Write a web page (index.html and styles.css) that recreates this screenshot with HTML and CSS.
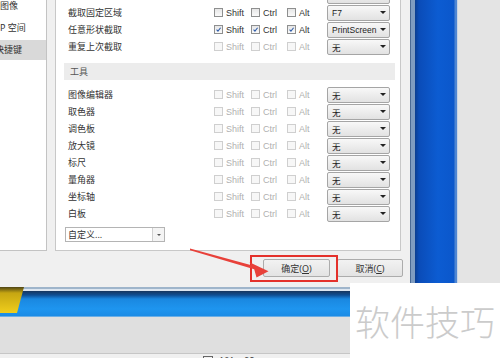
FILE: index.html
```html
<!DOCTYPE html>
<html lang="zh-CN">

    <head>
        <meta charset="UTF-8">
        <meta name="viewport" content="width=device-width, initial-scale=1.0">
        <title>快捷键设置</title>
        <link rel="stylesheet" href="styles.css">
    </head>

    <body>
        <div class="screen">
            <div class="top">
                <div class="dialog">
                    <div class="dialog-body">
                        <ul class="nav">
                            <li>图像</li>
                            <li>P 空间</li>
                            <li class="active"><span class="cut">快捷键</span></li>
                        </ul>

                        <div class="panel">
                            <div class="rows first">
                                <div class="row">
                                    <span class="label"></span>
                                    <span></span><span></span><span></span>
                                    <span class="select"><span></span><i class="caret"></i></span>
                                </div>
                                <div class="row">
                                    <span class="label">截取固定区域</span>
                                    <span class="check"><i class="box"></i>Shift</span>
                                    <span class="check"><i class="box"></i>Ctrl</span>
                                    <span class="check"><i class="box"></i>Alt</span>
                                    <span class="select"><span>F7</span><i class="caret"></i></span>
                                </div>
                                <div class="row">
                                    <span class="label">任意形状截取</span>
                                    <span class="check"><i class="box on"><svg viewBox="0 0 9 9"><path d="M2 4.6 L3.8 6.6 L7.2 2.2"/></svg></i>Shift</span>
                                    <span class="check"><i class="box on"><svg viewBox="0 0 9 9"><path d="M2 4.6 L3.8 6.6 L7.2 2.2"/></svg></i>Ctrl</span>
                                    <span class="check"><i class="box on"><svg viewBox="0 0 9 9"><path d="M2 4.6 L3.8 6.6 L7.2 2.2"/></svg></i>Alt</span>
                                    <span class="select"><span>PrintScreen</span><i class="caret"></i></span>
                                </div>
                                <div class="row off">
                                    <span class="label">重复上次截取</span>
                                    <span class="check"><i class="box"></i>Shift</span>
                                    <span class="check"><i class="box"></i>Ctrl</span>
                                    <span class="check"><i class="box"></i>Alt</span>
                                    <span class="select"><span>无</span><i class="caret"></i></span>
                                </div>
                            </div>

                            <div class="section">工具</div>

                            <div class="rows tools">
                                <div class="row off">
                                    <span class="label">图像编辑器</span>
                                    <span class="check"><i class="box"></i>Shift</span>
                                    <span class="check"><i class="box"></i>Ctrl</span>
                                    <span class="check"><i class="box"></i>Alt</span>
                                    <span class="select"><span>无</span><i class="caret"></i></span>
                                </div>
                                <div class="row off">
                                    <span class="label">取色器</span>
                                    <span class="check"><i class="box"></i>Shift</span>
                                    <span class="check"><i class="box"></i>Ctrl</span>
                                    <span class="check"><i class="box"></i>Alt</span>
                                    <span class="select"><span>无</span><i class="caret"></i></span>
                                </div>
                                <div class="row off">
                                    <span class="label">调色板</span>
                                    <span class="check"><i class="box"></i>Shift</span>
                                    <span class="check"><i class="box"></i>Ctrl</span>
                                    <span class="check"><i class="box"></i>Alt</span>
                                    <span class="select"><span>无</span><i class="caret"></i></span>
                                </div>
                                <div class="row off">
                                    <span class="label">放大镜</span>
                                    <span class="check"><i class="box"></i>Shift</span>
                                    <span class="check"><i class="box"></i>Ctrl</span>
                                    <span class="check"><i class="box"></i>Alt</span>
                                    <span class="select"><span>无</span><i class="caret"></i></span>
                                </div>
                                <div class="row off">
                                    <span class="label">标尺</span>
                                    <span class="check"><i class="box"></i>Shift</span>
                                    <span class="check"><i class="box"></i>Ctrl</span>
                                    <span class="check"><i class="box"></i>Alt</span>
                                    <span class="select"><span>无</span><i class="caret"></i></span>
                                </div>
                                <div class="row off">
                                    <span class="label">量角器</span>
                                    <span class="check"><i class="box"></i>Shift</span>
                                    <span class="check"><i class="box"></i>Ctrl</span>
                                    <span class="check"><i class="box"></i>Alt</span>
                                    <span class="select"><span>无</span><i class="caret"></i></span>
                                </div>
                                <div class="row off">
                                    <span class="label">坐标轴</span>
                                    <span class="check"><i class="box"></i>Shift</span>
                                    <span class="check"><i class="box"></i>Ctrl</span>
                                    <span class="check"><i class="box"></i>Alt</span>
                                    <span class="select"><span>无</span><i class="caret"></i></span>
                                </div>
                                <div class="row off">
                                    <span class="label">白板</span>
                                    <span class="check"><i class="box"></i>Shift</span>
                                    <span class="check"><i class="box"></i>Ctrl</span>
                                    <span class="check"><i class="box"></i>Alt</span>
                                    <span class="select"><span>无</span><i class="caret"></i></span>
                                </div>
                            </div>

                            <div class="custom">
                                <span class="custom-text">自定义...</span>
                                <span class="custom-btn"><i class="caret small"></i></span>
                            </div>
                        </div>
                    </div>

                    <div class="buttons">
                        <button class="btn">确定(<u>O</u>)</button>
                        <button class="btn">取消(<u>C</u>)</button>
                    </div>

                    <!-- annotation drawn over the dialog -->
                    <div class="mark"></div>
                    <svg class="arrow" viewBox="0 0 410 283">
                        <polygon points="190,248.4 251.5,265.2 249.5,262.2 268.5,271.2 256.5,277.5 254.2,269.2 190,250.2"/>
                    </svg>
                </div>
                <div class="strip"></div>
                <div class="desk"></div>
            </div>

            <div class="taskbar"><div class="orb"></div></div>
            <div class="tray"></div>
            <div class="status"><i class="status-icon"></i>101 × 92</div>

            <div class="watermark">软件技巧</div>
        </div>
    </body>

</html>
```

FILE: styles.css
```css
* {
    box-sizing: border-box;
}

html,
body {
    margin: 0;
}

body {
    width: 500px;
    height: 358px;
    overflow: hidden;
    font-family: "Noto Sans", "Noto Sans CJK SC", sans-serif;
    font-size: 9px;
    color: #333;
    background-color: #f0f0f0;
}

.screen {
    position: relative;
    height: 358px;
}

.top {
    display: flex;
    height: 283px;
}

/* dialog */
.dialog {
    position: relative;
    width: 410px;
    background-color: #f0f0f0;
}

.dialog-body {
    display: flex;
    gap: 8px;
    height: 251px;
}

.nav {
    width: 47px;
    margin: 0;
    padding: 0;
    list-style: none;
    background: white;
    border-right: 1px solid #c3c3c3;
    border-bottom: 1px solid #c3c3c3;
    display: flex;
    flex-direction: column;
    gap: 2px;
    overflow: hidden;
}

.nav li {
    height: 20px;
    line-height: 20px;
    white-space: nowrap;
}

.nav li:first-child {
    margin-top: -4px;
}

.nav li.active {
    background-color: #d9d9d9;
}

.cut {
    margin-left: -5px;
}

.panel {
    width: 346px;
    background: white;
    border: 1px solid #c8c8c8;
    border-top: none;
    padding: 0 5px 0 8px;
    overflow: hidden;
}

.rows.first {
    margin-top: -13px;
}

.rows.tools {
    margin-top: 6px;
}

.row {
    display: grid;
    grid-template-columns: 146px 37px 36px 40px 63px;
    align-items: center;
    height: 17px;
    padding-left: 4px;
}

.label {
    white-space: nowrap;
}

.check {
    display: flex;
    align-items: center;
    gap: 3px;
    font-family: "Liberation Sans", "Noto Sans CJK SC", sans-serif;
    color: #333;
}

.box {
    width: 9px;
    height: 9px;
    border: 1px solid #8e8f8f;
    background: linear-gradient(#e6e6e6, #fafafa);
    display: flex;
}

.box svg {
    width: 7px;
    height: 7px;
}

.box path {
    fill: none;
    stroke: #2c5aa8;
    stroke-width: 1.3;
}

.row.off .check {
    color: #b0b0b0;
}

.row.off .box {
    border-color: #cfcfcf;
    background: #f7f7f7;
}

.select {
    height: 16px;
    border: 1px solid #a5a5a5;
    border-radius: 2px;
    background: linear-gradient(#f8f8f8, #e2e2e2);
    padding-left: 4px;
    display: flex;
    align-items: center;
    justify-content: space-between;
    font-family: "Liberation Sans", "Noto Sans CJK SC", sans-serif;
    font-size: 8.5px;
    color: #222;
}

.caret {
    width: 0;
    height: 0;
    margin-right: 3px;
    border-left: 3px solid transparent;
    border-right: 3px solid transparent;
    border-top: 3px solid #222;
}

.caret.small {
    margin: 0;
    border-left-width: 2.5px;
    border-right-width: 2.5px;
    border-top: 2.5px solid #555;
}

.section {
    margin-top: 8px;
    height: 17px;
    line-height: 17px;
    padding-left: 6px;
    background-color: #ececec;
    color: #555;
}

.custom {
    display: flex;
    width: 100px;
    height: 15px;
    margin: 5px 0 0 1px;
    border: 1px solid #b4b4b4;
    background: white;
}

.custom-text {
    flex: 1;
    line-height: 13px;
    padding-left: 2px;
}

.custom-btn {
    width: 12px;
    border-left: 1px solid #d0d0d0;
    background: #f4f4f4;
    display: flex;
    align-items: center;
    justify-content: center;
}

.buttons {
    display: flex;
    justify-content: flex-end;
    gap: 7px;
    padding: 8px 7px 0 0;
}

.btn {
    width: 67px;
    height: 18px;
    padding: 0;
    border: 1px solid #acacac;
    border-radius: 2px;
    background: linear-gradient(#f2f2f2, #e3e3e3);
    font-family: inherit;
    font-size: 9px;
    color: #333;
}

.btn + .btn {
    width: 66px;
}

.mark {
    position: absolute;
    left: 250px;
    top: 255px;
    width: 88px;
    height: 27px;
    border: 2px solid #e4312b;
}

.arrow {
    position: absolute;
    left: 0;
    top: 0;
    width: 410px;
    height: 283px;
    pointer-events: none;
}

.arrow polygon {
    fill: #e8413a;
}

/* desktop behind the dialog */
.strip {
    width: 48px;
    background: linear-gradient(to right, #4a6a94 0 1px, #7f9cc0 1px 5px, #0b3d8f 5px, #0a4cb8 9px, #0c5cd2 28px, #0b57cb 44px, #4f86d2 45px 47px, #c9d5e6 47px);
}

.desk {
    flex: 1;
    background-color: #e4e4e4;
}

.taskbar {
    height: 30px;
    background: linear-gradient(#9fb5cb 0 2px, #dde6f0 2px 4px, #17365e 4px, #0f4e92 8px, #1a88e0 12px, #1e95ef 22px, #1b8be5 29px, #6aaee6 29px);
}

.orb {
    width: 24px;
    height: 26px;
    margin-top: 4px;
    background: linear-gradient(#4f4514, #c6a612 6px, #f0ce1c);
    clip-path: polygon(0 0, 24px 0, 17px 100%, 0 100%);
}

.tray {
    height: 37px;
    background-color: #dfdfdf;
    border-bottom: 1px solid #c6c6c6;
}

.status {
    display: flex;
    align-items: flex-start;
    gap: 6px;
    height: 8px;
    padding: 2px 0 0 203px;
    background-color: #f0f0f0;
    color: #444;
    line-height: 9px;
}

.status-icon {
    width: 10px;
    height: 9px;
    border: 1px solid #666;
}

.watermark {
    position: absolute;
    left: 350px;
    top: 283px;
    width: 150px;
    height: 75px;
    background: white;
    display: flex;
    align-items: center;
    justify-content: center;
    font-family: "Noto Sans CJK SC", sans-serif;
    font-size: 35px;
    font-weight: 300;
    color: #cbcbcb;
}
```
